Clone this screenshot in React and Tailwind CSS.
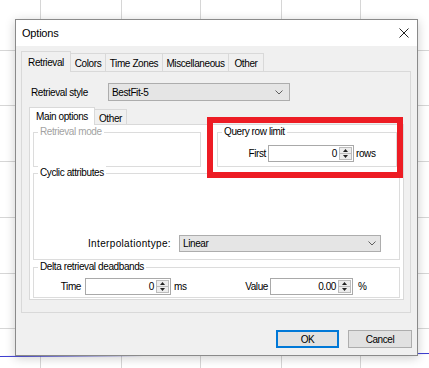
import React from 'react';

function Chevron() {
  return (
    <svg width="8" height="5" viewBox="0 0 8 5" className="shrink-0">
      <path d="M0.5 0.5 L4 4 L7.5 0.5" fill="none" stroke="#5f5f5f" strokeWidth="1" />
    </svg>
  );
}

function Combo({ value, className }) {
  return (
    <div className={`flex items-center justify-between border border-[#adadad] bg-[#e5e5e5] pl-[3px] ${className}`}>
      <span>{value}</span>
      <Chevron />
    </div>
  );
}

function Spin({ value, className }) {
  return (
    <div className={`flex h-[17px] items-stretch border border-[#a9a9a9] bg-white p-px ${className}`}>
      <span className="flex flex-1 items-center justify-end pr-[2px]">{value}</span>
      <div className="flex w-[13px] flex-col border border-[#bcbcbc] bg-[#ededed]">
        <div className="flex flex-1 items-center justify-center border-b border-[#bcbcbc]">
          <svg width="5" height="3" viewBox="0 0 5 3"><path d="M0 3 L2.5 0 L5 3 Z" fill="#222" /></svg>
        </div>
        <div className="flex flex-1 items-center justify-center">
          <svg width="5" height="3" viewBox="0 0 5 3"><path d="M0 0 L2.5 3 L5 0 Z" fill="#222" /></svg>
        </div>
      </div>
    </div>
  );
}

function GroupBox({ label, disabled, className, children }) {
  return (
    <div className={`relative border border-[#dcdcdc] ${className}`}>
      <span className={`absolute left-[4px] top-[-8px] bg-white px-[2px] leading-[14px] ${disabled ? 'text-[#a3a3a3]' : 'text-black'}`}>
        {label}
      </span>
      {children}
    </div>
  );
}

const outerTabs = [
  { label: 'Retrieval', w: 'w-[50px]', active: true },
  { label: 'Colors', w: 'w-[35px]' },
  { label: 'Time Zones', w: 'w-[57px]' },
  { label: 'Miscellaneous', w: 'w-[66px]' },
  { label: 'Other', w: 'w-[35px]' },
];

export default function App() {
  return (
    <div className="relative h-[368px] w-[429px] overflow-hidden bg-white">
      {/* chart grid behind the dialog */}
      <svg className="absolute inset-0" width="429" height="368">
        {[40.5, 121.5, 200.5, 281.5, 360.5].map((x) => (
          <line key={x} x1={x} y1="0" x2={x} y2="368" stroke="#d6d6d6" strokeWidth="1" />
        ))}
        {[50.5, 105.5, 161.5, 217.5, 273.5, 328.5].map((y) => (
          <line key={y} x1="0" y1={y} x2="429" y2={y} stroke="#d6d6d6" strokeWidth="1" />
        ))}
        <line x1="0" y1="356.5" x2="429" y2="353.5" stroke="#3a3ad0" strokeWidth="1" />
      </svg>

      {/* dialog window */}
      <div className="absolute left-[15px] top-[19px] flex h-[337px] w-[403px] flex-col border border-[#8a8a8a] bg-[#f0f0f0] text-[10px] leading-[13px] tracking-[-0.4px] text-black shadow-[0_2px_10px_rgba(0,0,0,0.2)] font-['Liberation_Sans',Arial,sans-serif]">
        <div className="flex h-[26px] shrink-0 items-center justify-between bg-white pl-[6px]">
          <span className="text-[11px] tracking-[-0.2px]">Options</span>
          <div className="flex w-[26px] justify-center">
            <svg width="10" height="10" viewBox="0 0 10 10">
              <path d="M0.5 0.5 L9.5 9.5 M9.5 0.5 L0.5 9.5" stroke="#222" strokeWidth="1" />
            </svg>
          </div>
        </div>

        <div className="flex flex-1 flex-col px-[5px] pt-[5px]">
          {/* outer tabs */}
          <div className="flex h-[20px] items-end">
            {outerTabs.map((t) =>
              t.active ? (
                <div key={t.label} className={`relative z-10 -mb-px flex h-[21px] items-center justify-center border-x border-t border-[#d9d9d9] bg-[#f0f0f0] ${t.w}`}>
                  {t.label}
                </div>
              ) : (
                <div key={t.label} className={`flex h-[18px] items-center justify-center border-r border-t border-[#d9d9d9] bg-[#f0f0f0] pt-px ${t.w}`}>
                  {t.label}
                </div>
              )
            )}
          </div>

          <div className="flex h-[242px] w-[390px] flex-col border border-[#d9d9d9] bg-[#f0f0f0] pt-[11px]">
            <div className="flex items-center pl-[9px]">
              <span className="w-[77px]">Retrieval style</span>
              <Combo value="BestFit-5" className="h-[18px] w-[182px] pr-[6px]" />
            </div>

            {/* inner tabs */}
            <div className="ml-[7px] mt-[6px] flex flex-col">
              <div className="flex h-[17px] items-end">
                <div className="relative z-10 -mb-px flex h-[18px] w-[66px] items-center justify-center border-x border-t border-[#d9d9d9] bg-white">
                  Main options
                </div>
                <div className="flex h-[15px] w-[32px] items-center justify-center border-r border-t border-[#d9d9d9] bg-[#f0f0f0] pt-[2px]">
                  Other
                </div>
              </div>

              <div className="flex h-[176px] w-[375px] flex-col border border-[#d9d9d9] bg-white pl-[3px]">
                <div className="mt-[7px] flex gap-[16px]">
                  <GroupBox label="Retrieval mode" disabled className="h-[35px] w-[168px]" />
                  <GroupBox label="Query row limit" className="h-[35px] w-[180px]">
                    <div className="flex items-center pt-[12px]">
                      <span className="w-[48px] text-right">First</span>
                      <Spin value="0" className="ml-[2px] w-[86px]" />
                      <span className="ml-[2px]">rows</span>
                    </div>
                  </GroupBox>
                </div>

                <GroupBox label="Cyclic attributes" className="mt-[6px] h-[87px] w-[367px]">
                  <div className="flex items-center pt-[61px]">
                    <span className="w-[137px] text-right tracking-[0.35px]">Interpolationtype:</span>
                    <Combo value="Linear" className="ml-[8px] h-[17px] w-[202px] pr-[4px]" />
                  </div>
                </GroupBox>

                <GroupBox label="Delta retrieval deadbands" className="mt-[7px] h-[31px] w-[367px]">
                  <div className="flex items-center pt-[10px]">
                    <span className="w-[47px] text-right">Time</span>
                    <Spin value="0" className="ml-[4px] w-[86px]" />
                    <span className="ml-[3px] w-[30px]">ms</span>
                    <span className="w-[64px] text-right">Value</span>
                    <Spin value="0.00" className="ml-[2px] w-[83px]" />
                    <span className="ml-[5px]">%</span>
                  </div>
                </GroupBox>
              </div>
            </div>
          </div>

          <div className="mt-[17px] flex justify-end gap-[9px]">
            <button className="flex h-[18px] w-[63px] items-center justify-center border-2 border-[#0078d7] bg-[#e1e1e1]">
              OK
            </button>
            <button className="flex h-[18px] w-[64px] items-center justify-center border border-[#adadad] bg-[#e1e1e1]">
              Cancel
            </button>
          </div>
        </div>
      </div>

      {/* red annotation frame */}
      <div className="absolute left-[207px] top-[117px] h-[61px] w-[196px] border-[6px] border-[#ed1c24]" />
    </div>
  );
}
